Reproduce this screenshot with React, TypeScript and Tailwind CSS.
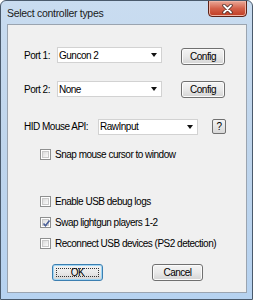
import React from 'react';

const ui = "font-['Liberation_Sans',Arial,sans-serif] text-[10px] tracking-[-0.5px] text-black";

function Button({ label, w, def }: { label: string; w: string; def?: boolean }) {
  return (
    <div
      className={`${w} h-[17px] rounded-[3px] border flex items-center justify-center bg-linear-to-b from-[#f4f4f4] via-[#e9e9e9] to-[#d4d4d4] ${
        def
          ? 'border-[#3c7fb1] shadow-[inset_0_0_0_1px_#9fd6f5]'
          : 'border-[#707070] shadow-[inset_0_0_0_1px_#fbfbfb]'
      }`}
    >
      {def ? (
        <div className="w-[calc(100%-6px)] h-[calc(100%-6px)] border border-dotted border-[#333] flex items-center justify-center">
          <span className={ui}>{label}</span>
        </div>
      ) : (
        <span className={ui}>{label}</span>
      )}
    </div>
  );
}

function Combo({ value, w }: { value: string; w: string }) {
  return (
    <div className={`${w} h-[16px] bg-white border border-[#d2d2d2] flex items-center pl-[1px] pr-[4px]`}>
      <span className={`${ui} flex-1`}>{value}</span>
      <svg width="6" height="4" viewBox="0 0 6 4">
        <path d="M0 0H6L3 4Z" fill="#111" />
      </svg>
    </div>
  );
}

function Check({ label, checked }: { label: string; checked?: boolean }) {
  return (
    <div className="flex items-center h-[11px] pl-[32px]">
      <div className="w-[11px] h-[11px] border border-[#8e8f8f] bg-white p-[1px]">
        <div className="w-full h-full bg-linear-to-br from-[#dcdcdc] to-[#fbfbfb] border border-[#c9c9c9] relative">
          {checked && (
            <svg className="absolute -left-[1px] -top-[1px]" width="9" height="9" viewBox="0 0 9 9">
              <path d="M1.5 4.5 L3.5 6.8 L7.5 1.5" stroke="#4a5f97" strokeWidth="1.6" fill="none" />
            </svg>
          )}
        </div>
      </div>
      <span className={`${ui} ml-[4px]`}>{label}</span>
    </div>
  );
}

export default function App() {
  return (
    <div className="w-[253px] h-[300px] rounded-t-[6px] border border-[#4a5a6c] bg-linear-to-b from-[#c9dcf0] via-[#bfd5ec] to-[#b6d2f0] flex flex-col overflow-hidden">
      {/* title bar */}
      <div className="h-[23px] flex items-start relative">
        <span className="font-['Liberation_Sans',Arial,sans-serif] text-[10.5px] tracking-[-0.3px] text-[#1a1a1a] ml-[6px] mt-[5px]">
          Select controller types
        </span>
        <div className="absolute right-[5px] -top-[1px] w-[39px] h-[17px] rounded-b-[4px] border border-[#5d2217] bg-linear-to-b from-[#e9a898] via-[#d4614a] to-[#bf3a22] shadow-[inset_0_0_0_1px_#f0b3a4] flex items-center justify-center">
          <svg width="11" height="10" viewBox="0 0 11 10">
            <path d="M2 1.5 L9 8.5 M9 1.5 L2 8.5" stroke="#4a2a26" strokeWidth="3.4" strokeLinecap="round" />
            <path d="M2 1.5 L9 8.5 M9 1.5 L2 8.5" stroke="#ffffff" strokeWidth="1.8" strokeLinecap="round" />
          </svg>
        </div>
      </div>

      {/* client area */}
      <div className="flex-1 ml-[6px] mr-[5px] mb-[6px] border border-[#9aa4b0] bg-[#f0f0f0] flex flex-col pt-[22px]">
        <div className="flex items-center h-[16px] pl-[16px]">
          <span className={`${ui} w-[33px]`}>Port 1:</span>
          <Combo value="Guncon 2" w="w-[105px]" />
          <div className="ml-[19px] mt-[2px]">
            <Button label="Config" w="w-[44px]" />
          </div>
        </div>
        <div className="flex items-center h-[16px] pl-[16px] mt-[18px]">
          <span className={`${ui} w-[33px]`}>Port 2:</span>
          <Combo value="None" w="w-[105px]" />
          <div className="ml-[19px]">
            <Button label="Config" w="w-[44px]" />
          </div>
        </div>
        <div className="flex items-center h-[17px] pl-[16px] mt-[21px]">
          <span className={`${ui} w-[74px]`}>HID Mouse API:</span>
          <Combo value="RawInput" w="w-[100px]" />
          <div className="ml-[14px] w-[14px] h-[15px] rounded-[2px] border border-[#707070] bg-linear-to-b from-[#f4f4f4] to-[#d8d8d8] flex items-center justify-center">
            <span className={ui}>?</span>
          </div>
        </div>
        <div className="mt-[14px]">
          <Check label="Snap mouse cursor to window" />
        </div>
        <div className="mt-[36px] flex flex-col gap-[10px]">
          <Check label="Enable USB debug logs" />
          <Check label="Swap lightgun players 1-2" checked />
          <Check label="Reconnect USB devices (PS2 detection)" />
        </div>
        <div className="flex mt-[15px] pl-[44px] gap-[49px]">
          <Button label="OK" w="w-[51px]" def />
          <Button label="Cancel" w="w-[51px]" />
        </div>
      </div>
    </div>
  );
}
